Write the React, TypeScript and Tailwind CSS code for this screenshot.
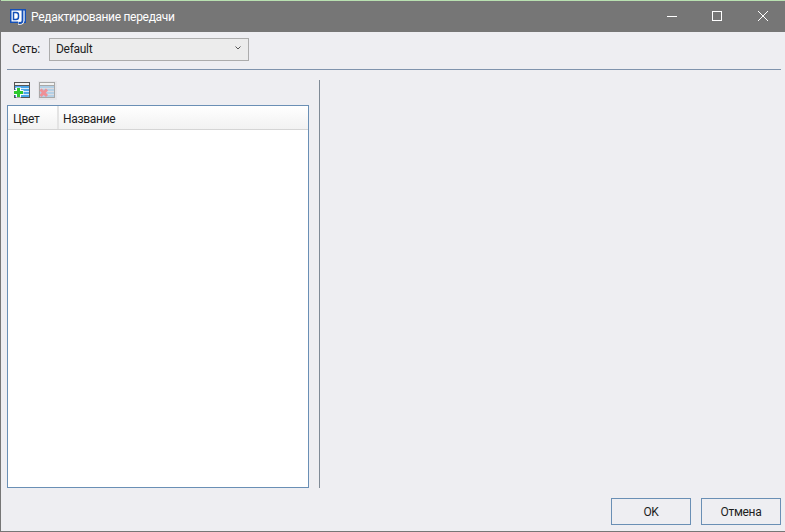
export default function App() {
  return (
    <div className="w-[785px] h-[532px] overflow-hidden flex flex-col bg-[#eeeef2] text-[12px] tracking-[-0.3px] text-[#1e1e1e] border-l border-b border-[#767676]" style={{ fontFamily: 'Roboto, sans-serif' }}>
      <div className="h-px -ml-px bg-[#b8e0b0] shrink-0" />
      <div className="h-[31px] shrink-0 bg-[#767676] flex items-center text-white pl-[9px]">
        <svg width="17" height="16" viewBox="0 0 17 16" className="shrink-0">
          <rect x="0" y="0" width="16" height="14" fill="#1450b8" />
          <rect x="1.500" y="1.500" width="13" height="11" fill="#fff" />
          <path d="M3.500 3.500h2.500q2.500 0 2.500 2.500v2q0 2.500-2.500 2.500h-2.500z" fill="none" stroke="#1450b8" strokeWidth="1.500" />
          <path d="M12.500 2v9.500q0 2.500-2.500 2.500H8" fill="none" stroke="#fff" strokeWidth="3.500" />
          <path d="M12.500 1v10.500q0 2.500-2.500 2.500H8.500" fill="none" stroke="#1450b8" strokeWidth="1.800" />
        </svg>
        <span className="ml-[4px]">Редактирование передачи</span>
        <div className="ml-auto flex items-center">
          <div className="w-[44px] h-[31px] flex items-center justify-center">
            <svg width="10" height="10" viewBox="0 0 10 10" className="mb-px"><path d="M0 5.500h10" stroke="#fff" /></svg>
          </div>
          <div className="w-[46px] h-[31px] flex items-center justify-center mr-px">
            <svg width="10" height="10" viewBox="0 0 10 10" className="mb-px"><rect x="0.500" y="0.500" width="9" height="9" fill="none" stroke="#fff" /></svg>
          </div>
          <div className="w-[44px] h-[31px] flex items-center justify-center">
            <svg width="10" height="10" viewBox="0 0 10 10" className="mb-px"><path d="M0 0l10 10M10 0L0 10" stroke="#fff" /></svg>
          </div>
        </div>
      </div>
      <div className="flex-1 min-h-0 flex flex-col pl-[6px] pr-[4px]">
        <div className="h-[37px] shrink-0 flex items-center pl-[5px] pb-[3px]">
          <span className="w-[37px]">Сеть:</span>
          <div className="w-[200px] h-[23px] border border-[#acacac] bg-[#ececec] flex items-center pl-[6px] pr-[7px] justify-between">
            <span>Default</span>
            <svg width="6" height="4" viewBox="0 0 6 4" className="mb-[3px]"><path d="M0.500 0.500L3 3L5.500 0.500" fill="none" stroke="#555" /></svg>
          </div>
        </div>
        <div className="h-px shrink-0 bg-[#7f93ad]" />
        <div className="flex-1 min-h-0 flex pt-[10px]">
          <div className="w-[302px] flex flex-col">
            <div className="h-[25px] shrink-0 flex items-start gap-[8px] pl-[7px] pt-[2px]">
              <svg width="17" height="17" viewBox="0 0 17 17">
                <rect x="0" y="0" width="16" height="16" fill="#555" />
                <rect x="1" y="1" width="14" height="2" fill="#f2f2f2" />
                <rect x="1" y="4" width="14" height="11" fill="#4aa5ea" />
                <path d="M1 6.500h14M1 9.500h14M1 12.500h14" stroke="#d8eefc" />
                <path d="M0 10.500h9.500M4.500 5.500v10" stroke="#fff" strokeWidth="5" />
                <path d="M0 10.500h9M4.500 6v9" stroke="#2ec82e" strokeWidth="3" />
              </svg>
              <div className="bg-[#e6e6ea] -m-px p-px">
                <svg width="17" height="17" viewBox="0 0 17 17">
                  <rect x="0" y="0" width="16" height="16" fill="#a8a8a8" />
                  <rect x="1" y="1" width="14" height="2" fill="#f2f2f2" />
                  <rect x="1" y="4" width="14" height="11" fill="#b4d0e6" />
                  <path d="M1 6.500h14M1 9.500h14M1 12.500h14" stroke="#dcdce2" />
                  <path d="M1.500 7.500l6.500 6.500M8 7.500l-6.500 6.500" stroke="#ef8f96" strokeWidth="3" />
                </svg>
              </div>
            </div>
            <div className="flex-1 mb-px border border-[#6a8fb5] bg-white flex flex-col">
              <div className="h-[24px] shrink-0 flex border-b border-[#d5d5d5] bg-gradient-to-b from-white to-[#f2f2f2]">
                <div className="w-[51px] pl-[5px] pt-[4px] border-r-2 border-[#e4e4e4]">Цвет</div>
                <div className="pl-[4px] pt-[4px]">Название</div>
              </div>
            </div>
          </div>
          <div className="w-px ml-[10px] mb-px bg-[#7f8a96]" />
        </div>
        <div className="h-[42px] shrink-0 flex justify-end items-start gap-[10px] pt-[9px]">
          <div className="w-[80px] h-[27px] border border-[#6a8fb5] flex items-center justify-center">OK</div>
          <div className="w-[80px] h-[27px] border border-[#6a8fb5] flex items-center justify-center">Отмена</div>
        </div>
      </div>
    </div>
  );
}
